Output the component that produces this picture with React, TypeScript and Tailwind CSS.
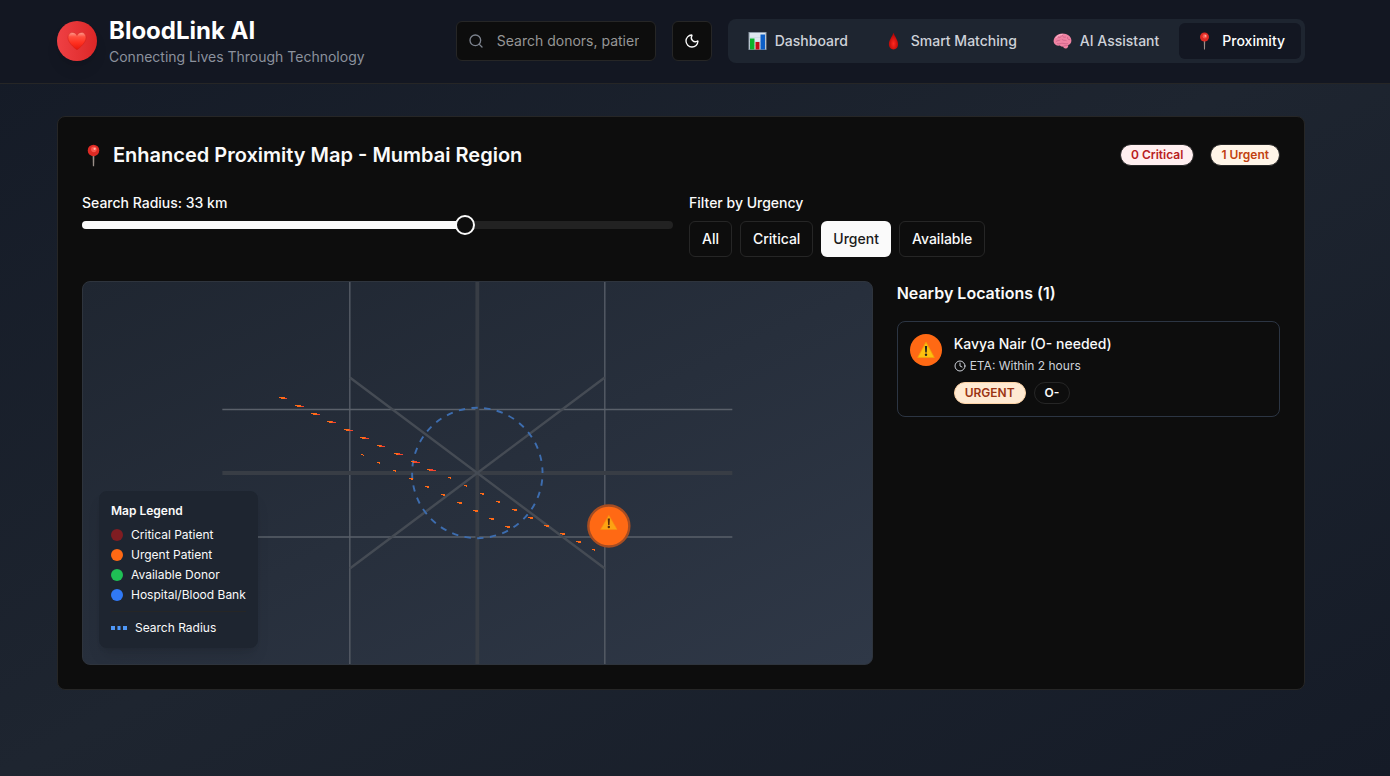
import { useState } from 'react';
import type { ReactNode } from 'react';
import { Clock, Moon, Search } from 'lucide-react';

const HeartIcon = () => (
  <svg viewBox="0 0 20 20" className="size-5" aria-hidden="true">
    <defs>
      <linearGradient id="heart" x1="0" y1="0" x2="0" y2="1">
        <stop offset="0" stopColor="#ff9d90" />
        <stop offset="0.25" stopColor="#ff5040" />
        <stop offset="0.6" stopColor="#ff3020" />
        <stop offset="1" stopColor="#e8170c" />
      </linearGradient>
    </defs>
    <path
      d="M10 18.8C6.500 16.200 1 11.500 1 6.600 1 3.500 3 1.500 5.500 1.500c2 0 3.600 1.200 4.500 3 .9-1.800 2.500-3 4.500-3C17 1.500 19 3.500 19 6.600c0 4.900-5.500 9.600-9 12.200z"
      fill="url(#heart)"
      stroke="#c9190f"
      strokeWidth="0.4"
    />
  </svg>
);

const ChartIcon = () => (
  <svg viewBox="0 0 18 18" className="h-[18px] w-[19px]" aria-hidden="true">
    <rect x="0.5" y="0.5" width="17" height="17" fill="#dde6ef" stroke="#8d99a6" />
    <path d="M1 5.5h16M1 9.5h16M1 13.5h16" stroke="#c8d4df" strokeWidth="0.6" />
    <rect x="1.5" y="6.5" width="4.5" height="11" fill="#0bb32a" />
    <rect x="7" y="10" width="4" height="7.5" fill="#c30d17" />
    <rect x="12" y="2.5" width="4.5" height="15" fill="#0c5ec6" />
  </svg>
);

const DropIcon = () => (
  <svg viewBox="0 0 18 18" className="h-[18px] w-[19px]" aria-hidden="true">
    <defs>
      <radialGradient id="drop" cx="0.5" cy="0.65" r="0.55">
        <stop offset="0" stopColor="#ff2a20" />
        <stop offset="1" stopColor="#b60505" />
      </radialGradient>
    </defs>
    <path d="M9 .8c1 3.6 4.6 7.2 4.6 11.4 0 3-2 5.2-4.6 5.2s-4.600-2.200-4.600-5.200C4.400 8 8 4.400 9 .8z" fill="url(#drop)" />
  </svg>
);

const BrainIcon = () => (
  <svg viewBox="0 0 19 18" className="h-[18px] w-[19px]" aria-hidden="true">
    <path
      d="M.6 9.500C.5 5.500 4 1.500 9.500 1.500c5 0 8.900 3 8.900 7 0 2.500-1.400 4-3.200 4.400.4 1.600-.6 3.300-2.400 3.600-1.300.1-2.300-.7-2.800-1.900-1.300.3-2.400-.2-3-1C3.500 14 .8 12.500.6 9.500z"
      fill="#ef83a3"
    />
    <path
      d="M3 9.500c1.400-1.600 2.700-.3 4-1.400M5 5c1.200 1.200 2.400.4 3.400-.6M9.500 3.500c.2 1.600 1.500 2 3 1.600M9 7.500c1.500 1.500 3 .2 4.200 1M14.500 5.500c-.2 1.500.8 2.400 2.400 2.200M4.500 11.700c2 .6 3.600-.6 5.400-.4 1.400.1 2.800 1 4.600.3M10.500 14.200c1-.7 2.500-.6 4-.7"
      fill="none"
      stroke="#c45c82"
      strokeWidth="0.7"
      strokeLinecap="round"
    />
    <path d="M3 5.800C4.300 3.700 6.500 2.600 9 2.500" fill="none" stroke="#ffc1d2" strokeWidth="0.9" strokeLinecap="round" />
  </svg>
);

const PinIcon = ({ className }: { className: string }) => (
  <svg viewBox="0 0 18 18" className={className} aria-hidden="true">
    <path d="M8.300 8h1.400l-.2 9.500h-1z" fill="#9a8f88" />
    <circle cx="9" cy="5" r="4.500" fill="#dd2a24" />
    <circle cx="9.300" cy="4.200" r="2.200" fill="#f7564c" />
    <circle cx="9.900" cy="3.800" r="0.9" fill="#ffb5ab" />
  </svg>
);

const WarningIcon = ({ className }: { className: string }) => (
  <svg viewBox="0 0 18 18" className={className} aria-hidden="true">
    <path d="M9 1.200 17.300 16.500H.7z" fill="#fdc00f" stroke="#f0a50a" strokeWidth="0.8" strokeLinejoin="round" />
    <path d="M7.900 5h2.200l-.4 6.500H8.300z" fill="#222" />
    <circle cx="9" cy="13.700" r="1.200" fill="#222" />
  </svg>
);

const tabs: { name: string; icon: ReactNode }[] = [
  { name: 'Dashboard', icon: <ChartIcon /> },
  { name: 'Smart Matching', icon: <DropIcon /> },
  { name: 'AI Assistant', icon: <BrainIcon /> },
  { name: 'Proximity', icon: <PinIcon className="h-[18px] w-[19px]" /> },
];

const filters = ['All', 'Critical', 'Urgent', 'Available'];

const legend = [
  { label: 'Critical Patient', color: 'bg-[#7f1d22]' },
  { label: 'Urgent Patient', color: 'bg-[#ff6914]' },
  { label: 'Available Donor', color: 'bg-[#1fc055]' },
  { label: 'Hospital/Blood Bank', color: 'bg-[#3079f6]' },
];

// Trail segments: x, y, orange length, red length
const trails = [
  [57, 115, 6, 2],
  [73, 123, 6, 3],
  [89, 131, 6, 3],
  [105, 139, 5, 4],
  [122, 147, 5, 4],
  [138, 155, 5, 4],
  [155, 163, 4, 4],
  [172, 171, 4, 5],
  [189, 179, 3, 6],
  [205, 187, 3, 6],
  [226, 195, 3, 0],
  [242, 203, 3, 0],
  [258, 211, 4, 0],
  [274, 219, 4, 0],
  [290, 227, 5, 0],
  [306, 235, 5, 0],
  [322, 243, 5, 0],
  [338, 251, 5, 0],
  [354, 259, 5, 0],
  [370, 267, 3, 0],
  [139, 172, 2, 0],
  [155, 180, 3, 0],
  [171, 188, 3, 0],
  [187, 196, 4, 0],
  [203, 204, 4, 0],
  [219, 212, 4, 0],
  [235, 220, 5, 0],
  [251, 228, 5, 0],
  [267, 236, 5, 0],
  [283, 244, 5, 0],
];

const CityMap = () => (
  <svg viewBox="0 0 510 382" className="h-full w-full" role="img" aria-label="Mumbai map">
    <path d="M0 127.500H510M0 255H510M127.500 0V382M382.500 0V382" stroke="#5a606a" strokeWidth="1.300" />
    <path d="M0 191H510M255 0V382" stroke="#383d45" strokeWidth="3.800" />
    <path d="M127.500 95.500 382.500 286.500M382.500 95.500 127.500 286.500" stroke="#454b54" strokeWidth="2.500" />
    <circle cx="255" cy="191" r="65.200" fill="none" stroke="#3d6daf" strokeWidth="1.900" strokeDasharray="6.400 6.400" strokeDashoffset="6.400" />
    {trails.map(([x, y, orange, red]) => (
      <g key={`${x}-${y}`} shapeRendering="crispEdges">
        <rect x={x} y={y} width={orange} height="1" fill="#ff6a18" />
        <rect x={x + 2} y={y + 1} width={orange > 3 ? orange - 2 : 1} height="1" fill="#ff6a18" />
        {red > 0 && <rect x={x + orange} y={y + 1} width={red} height="1" fill="#f4432c" />}
        {red > 3 && <rect x={x + orange} y={y} width={red - 3} height="1" fill="#f4432c" />}
      </g>
    ))}
    <circle cx="386.500" cy="244" r="20.500" fill="#ff6914" stroke="#a64d22" strokeWidth="2.400" />
    <svg x="377.500" y="232" width="18" height="18" viewBox="0 0 18 18">
      <path d="M9 1.200 17.300 15.500H.7z" fill="#fda313" stroke="#f58f10" strokeWidth="0.6" strokeLinejoin="round" />
      <path d="M7.900 4.500h2.200l-.4 6.500H8.300z" fill="#5a2b0a" />
      <circle cx="9" cy="13" r="1.200" fill="#5a2b0a" />
    </svg>
  </svg>
);

const App = () => {
  const [activeTab, setActiveTab] = useState('Proximity');
  const [filter, setFilter] = useState('Urgent');
  const [radius, setRadius] = useState(33);

  // Fill of the track for a range of 1 to 50 km
  const percent = ((radius - 1) / 49) * 100;

  return (
    <div className="min-h-screen bg-linear-to-br from-[#141a26] via-[#1e2530] to-[#151b27] font-['Inter',sans-serif] text-[#fafafa]">
      <header className="border-b border-[#262626] bg-[#131722] pr-7">
        <div className="mx-auto flex h-[83px] max-w-7xl items-center justify-between px-4 pb-0.5">
          <div className="flex items-center gap-3">
            <div className="flex size-10 items-center justify-center rounded-full bg-linear-to-r from-[#ef4044] to-[#dc2626] shadow-lg">
              <HeartIcon />
            </div>
            <div>
              <h1 className="text-2xl font-bold text-white">BloodLink AI</h1>
              <p className="text-sm text-[#8b919d]">Connecting Lives Through Technology</p>
            </div>
          </div>

          <div className="flex items-center gap-4">
            <label className="relative">
              <Search className="absolute top-3 left-3 size-4 text-[#7d838e]" />
              <input
                type="text"
                aria-label="Search"
                placeholder="Search donors, patients..."
                className="h-10 w-[200px] rounded-md border border-[#262626] bg-[#0d0d0d] pr-4 pl-10 text-sm placeholder:text-[#969696]"
              />
            </label>
            <button aria-label="Toggle theme" className="flex size-10 items-center justify-center rounded-md border border-[#262626] bg-[#0d0d0d]">
              <Moon className="size-4" />
            </button>
            <nav className="flex gap-1 rounded-lg bg-[#1e2530] p-1">
              {tabs.map((tab) => (
                <button
                  key={tab.name}
                  onClick={() => setActiveTab(tab.name)}
                  className={`flex h-9 items-center gap-2 rounded-md px-4 text-sm font-medium ${
                    activeTab === tab.name ? 'bg-[#131722] text-white' : 'text-[#ced2d9]'
                  }`}
                >
                  {tab.icon}
                  {tab.name}
                </button>
              ))}
            </nav>
          </div>
        </div>
      </header>

      <main className="pr-7">
        <div className="mx-auto max-w-7xl px-4 py-8">
          <section className="rounded-lg border border-[#262626] bg-[#0d0d0d] p-6">
            <div className="flex items-center justify-between">
              <h2 className="flex items-center gap-2 text-xl font-semibold">
                <PinIcon className="size-[23px]" />
                Enhanced Proximity Map - Mumbai Region
              </h2>
              <div className="flex gap-4 text-xs leading-5 font-semibold">
                <span className="rounded-full border border-[#262626] bg-[#ffeff0] px-2.5 text-[#b91c22]">0 Critical</span>
                <span className="rounded-full border border-[#262626] bg-[#fff5e8] px-2.5 text-[#c2410f]">1 Urgent</span>
              </div>
            </div>

            <div className="mt-6 grid grid-cols-2 gap-4">
              <div>
                <label htmlFor="radius" className="block text-sm font-medium">
                  Search Radius: {radius} km
                </label>
                <div className="relative mt-2 h-2 rounded-full bg-[#222222]">
                  <div className="h-2 rounded-full bg-[#fafafa]" style={{ width: `${percent}%` }} />
                  <input
                    type="range"
                    id="radius"
                    min={1}
                    max={50}
                    value={radius}
                    onChange={(e) => setRadius(Number(e.target.value))}
                    className="absolute inset-x-0 -top-1.5 h-5 w-full appearance-none bg-transparent [&::-webkit-slider-thumb]:size-5 [&::-webkit-slider-thumb]:appearance-none [&::-webkit-slider-thumb]:rounded-full [&::-webkit-slider-thumb]:border-2 [&::-webkit-slider-thumb]:border-[#fafafa] [&::-webkit-slider-thumb]:bg-[#0d0d0d]"
                  />
                </div>
              </div>
              <div>
                <p className="text-sm font-medium">Filter by Urgency</p>
                <div className="mt-2 flex gap-2">
                  {filters.map((name) => (
                    <button
                      key={name}
                      onClick={() => setFilter(name)}
                      className={`h-9 rounded-md px-3 text-sm font-medium ${
                        filter === name ? 'bg-[#fafafa] text-[#1a1a1a]' : 'border border-[#262626]'
                      }`}
                    >
                      {name}
                    </button>
                  ))}
                </div>
              </div>
            </div>

            <div className="mt-6 grid grid-cols-3 gap-6">
              <div className="relative col-span-2 h-96 overflow-hidden rounded-lg border border-[#2e343d] bg-linear-to-br from-[#1f2631] to-[#2f3847]">
                <CityMap />
                <div className="absolute bottom-4 left-4 rounded-lg bg-[#1e2530] p-3 text-xs shadow-lg">
                  <h4 className="font-semibold">Map Legend</h4>
                  <ul className="mt-2 space-y-1">
                    {legend.map((item) => (
                      <li key={item.label} className="flex items-center gap-2">
                        <span className={`size-3 rounded-full ${item.color}`} />
                        {item.label}
                      </li>
                    ))}
                  </ul>
                  <div className="mt-2 flex items-center gap-2 border-t border-[#262626] pt-2">
                    <svg viewBox="0 0 16 4" className="h-1 w-4" aria-hidden="true">
                      <path d="M0 0h4v4H0zM12 0h4v4h-4zM7 0h2v4H7z" fill="#4f98f8" />
                      <path d="M6 0h1v4H6zM9 0h1v4H9z" fill="#35609c" />
                    </svg>
                    Search Radius
                  </div>
                </div>
              </div>

              <div>
                <h3 className="font-semibold">Nearby Locations (1)</h3>
                <article className="mt-4 flex gap-3 rounded-lg border border-[#2c3543] p-3">
                  <div className="flex size-8 shrink-0 items-center justify-center rounded-full bg-[#ff6914]">
                    <WarningIcon className="size-[18px]" />
                  </div>
                  <div>
                    <h4 className="text-sm font-medium">Kavya Nair (O- needed)</h4>
                    <p className="mt-1 flex items-center gap-1 text-xs text-[#ced2d9]">
                      <Clock className="size-3" />
                      ETA: Within 2 hours
                    </p>
                    <div className="mt-2 flex gap-2 text-xs leading-5 font-semibold">
                      <span className="rounded-full border border-[#fdd2a5] bg-[#ffead2] px-2.5 text-[#9a3412]">URGENT</span>
                      <span className="rounded-full border border-[#262626] px-2.5">O-</span>
                    </div>
                  </div>
                </article>
              </div>
            </div>
          </section>
        </div>
      </main>
    </div>
  );
};

export default App;
